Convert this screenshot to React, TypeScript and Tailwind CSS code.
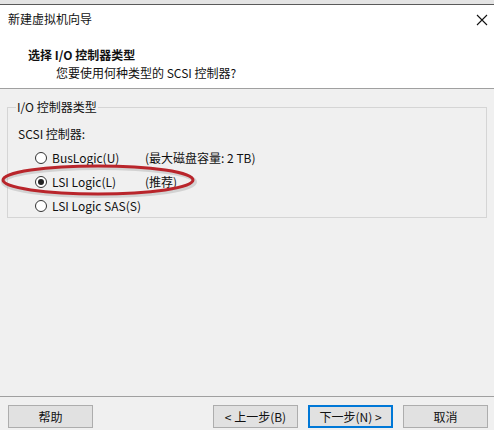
import React from "react";

const font = { fontFamily: '"Noto Sans CJK SC", "Noto Sans", sans-serif' };

function Radio({ checked }: { checked?: boolean }) {
  return (
    <span className="flex h-[12px] w-[12px] items-center justify-center rounded-full border border-[#333333] bg-white">
      {checked && <span className="h-[6px] w-[6px] rounded-full bg-[#222222]" />}
    </span>
  );
}

function Btn({ children, primary }: { children: React.ReactNode; primary?: boolean }) {
  return (
    <button
      className={
        "flex h-[23px] w-[85px] items-center justify-center bg-[#e1e1e1] text-[12px] leading-none text-[#111] " +
        (primary ? "border-2 border-[#0078d7]" : "border border-[#adadad]")
      }
    >
      {children}
    </button>
  );
}

export default function App() {
  return (
    <div className="relative flex h-[430px] w-[494px] flex-col overflow-hidden bg-[#f0f0f0] text-[12px] text-[#111]" style={font}>
      <div className="h-[4px] bg-[#e4e4e4]" />
      <div className="h-[1px] bg-[#5a5a5a]" />
      <div className="flex h-[83px] flex-col bg-white">
        <div className="flex items-center justify-between pl-[8px] pr-[6px] pt-[6px] leading-[16px]">
          <span>新建虚拟机向导</span>
          <svg width="12" height="12" viewBox="0 0 12 12" className="mt-[2px]">
            <path d="M1 1 L11 11 M11 1 L1 11" stroke="#111" strokeWidth="1.1" />
          </svg>
        </div>
        <div className="pl-[28px] pt-[20px] font-bold leading-[16px]">选择 I/O 控制器类型</div>
        <div className="pl-[56px] pt-[2px] leading-[16px]">您要使用何种类型的 SCSI 控制器?</div>
      </div>
      <div className="h-[1px] bg-[#a0a0a0]" />
      <div className="px-[7px] pt-[11px]">
        <fieldset className="h-[118px] border border-[#d5d5d5] px-[10px] pb-0 pt-0">
          <legend className="ml-[-2px] px-[1px] leading-[14px] text-[#111]">I/O 控制器类型</legend>
          <div className="pt-[13px] leading-[14px]">SCSI 控制器:</div>
          <div className="mt-[5px] flex flex-col">
            <div className="flex h-[24px] items-center">
              <span className="ml-[17px]"><Radio /></span>
              <span className="ml-[5px] w-[93px]">BusLogic(U)</span>
              <span>(最大磁盘容量: 2 TB)</span>
            </div>
            <div className="flex h-[24px] items-center">
              <span className="ml-[17px]"><Radio checked /></span>
              <span className="ml-[5px] w-[93px]">LSI Logic(L)</span>
              <span>(推荐)</span>
            </div>
            <div className="flex h-[24px] items-center">
              <span className="ml-[17px]"><Radio /></span>
              <span className="ml-[5px]">LSI Logic SAS(S)</span>
            </div>
          </div>
        </fieldset>
      </div>
      <div className="flex-1" />
      <div className="h-[1px] bg-[#a0a0a0]" />
      <div className="flex h-[33px] items-start pl-[8px] pr-[6px] pt-[8px]">
        <Btn>帮助</Btn>
        <div className="flex-1" />
        <Btn>&lt; 上一步(B)</Btn>
        <div className="w-[10px]" />
        <Btn primary>下一步(N) &gt;</Btn>
        <div className="w-[10px]" />
        <Btn>取消</Btn>
      </div>
      <svg className="pointer-events-none absolute left-0 top-0" width="494" height="430">
        <ellipse cx="99" cy="182" rx="96" ry="14" fill="none" stroke="#9a9a9a" strokeOpacity="0.35" strokeWidth="4" />
        <ellipse cx="98" cy="180" rx="95" ry="14" fill="none" stroke="#b9252b" strokeWidth="3" />
      </svg>
    </div>
  );
}
